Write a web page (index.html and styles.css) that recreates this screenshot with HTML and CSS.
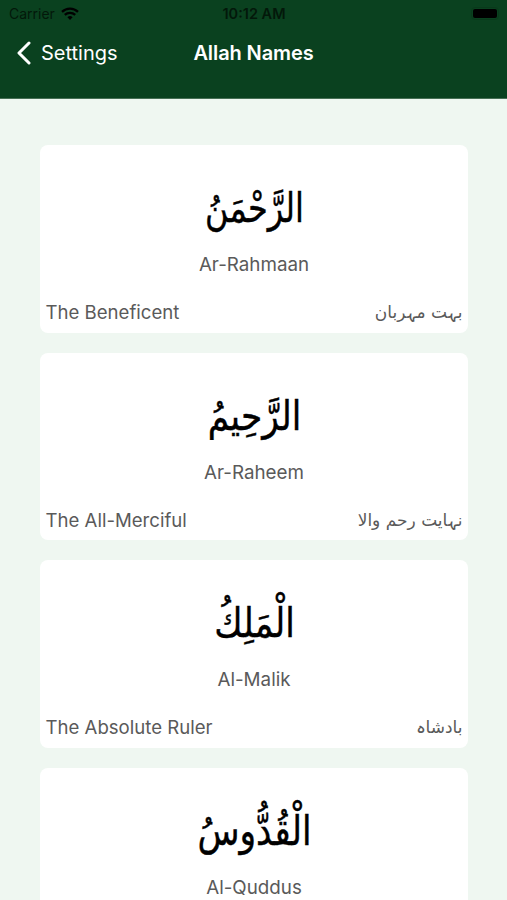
FILE: index.html
```
<!DOCTYPE html>
<html lang="en">
<head>
  <meta charset="UTF-8" />
  <title>Allah Names</title>
  <link rel="stylesheet" href="styles.css">
</head>
<body>
  <!-- Header -->
  <header class="header">
    <div class="status-bar">
      <div class="carrier">
        <span>Carrier</span>
        <svg class="wifi" viewBox="0 0 18 13" width="18" height="13">
          <path d="M1 4.8a11.5 11.5 0 0 1 16 0" />
          <path d="M3.8 7.9a7.5 7.5 0 0 1 10.4 0" />
          <path class="wifi-dot" d="M6.4 10.2a4 4 0 0 1 5.2 0L9 13z" />
        </svg>
      </div>
      <span class="time">10:12 AM</span>
      <div class="battery"><span class="battery-level"></span></div>
    </div>
    <nav class="nav-bar">
      <a class="back">
        <svg viewBox="0 0 16 24" width="16" height="24"><path d="M14 2L4 12l10 10" /></svg>
        <span>Settings</span>
      </a>
      <h1 class="title">Allah Names</h1>
    </nav>
  </header>

  <!-- Names list -->
  <main class="names">
    <div class="card">
      <div class="arabic narrow" lang="ar" dir="rtl">الرَّحْمَنُ</div>
      <div class="latin">Ar-Rahmaan</div>
      <div class="meaning">
        <span>The Beneficent</span>
        <span class="urdu" lang="ur" dir="rtl">بہت مہربان</span>
      </div>
    </div>
    <div class="card">
      <div class="arabic" lang="ar" dir="rtl">الرَّحِيمُ</div>
      <div class="latin">Ar-Raheem</div>
      <div class="meaning">
        <span>The All-Merciful</span>
        <span class="urdu" lang="ur" dir="rtl">نہایت رحم والا</span>
      </div>
    </div>
    <div class="card">
      <div class="arabic" lang="ar" dir="rtl">الْمَلِكُ</div>
      <div class="latin">Al-Malik</div>
      <div class="meaning">
        <span>The Absolute Ruler</span>
        <span class="urdu" lang="ur" dir="rtl">بادشاہ</span>
      </div>
    </div>
    <div class="card">
      <div class="arabic" lang="ar" dir="rtl">الْقُدُّوسُ</div>
      <div class="latin">Al-Quddus</div>
    </div>
  </main>
</body>
</html>
```
FILE: styles.css
```
* {
  margin: 0;
  padding: 0;
  box-sizing: border-box;
}

body {
  font-family: Inter, "DejaVu Sans", sans-serif;
  background-color: #eff7f1;
  color: #5a5a5a;
  height: 100vh;
  overflow: hidden;
}

/* Header */
.header {
  height: 99px;
  background-color: #0a411f;
  border-bottom: 1px solid #476f55;
}

.status-bar {
  display: grid;
  grid-template-columns: 1fr auto 1fr;
  align-items: center;
  height: 27px;
  padding: 0 8px 0 9px;
  font-size: 14px;
  color: #03180a;
}

.carrier {
  display: flex;
  align-items: center;
  gap: 6px;
}

.wifi {
  fill: none;
  stroke: #000;
  stroke-width: 2.3;
}

.wifi-dot {
  fill: #000;
  stroke: none;
}

.time {
  font-size: 14.5px;
  font-weight: 600;
}

.battery {
  justify-self: end;
  width: 28px;
  height: 13px;
  padding: 1px;
  border: 1px solid #093a1b;
  border-radius: 4px;
}

.battery-level {
  display: block;
  height: 100%;
  border-radius: 2px;
  background-color: #000;
}

.nav-bar {
  display: grid;
  grid-template-columns: 1fr auto 1fr;
  align-items: center;
  height: 51px;
  padding: 0 15px;
  color: #fff;
}

.back {
  display: flex;
  align-items: center;
  gap: 10px;
  font-size: 20px;
}

.back svg {
  fill: none;
  stroke: #fff;
  stroke-width: 3;
  stroke-linecap: round;
  stroke-linejoin: round;
}

.title {
  font-size: 20px;
  font-weight: 600;
  letter-spacing: -0.1px;
}

/* Cards */
.names {
  display: flex;
  flex-direction: column;
  gap: 20px;
  height: 801px;
  padding: 46px 39px 0 40px;
  overflow: hidden;
}

.card {
  flex-shrink: 0;
  height: 187.7px;
  padding: 0 5.5px;
  border-radius: 8px;
  background-color: #fff;
}

.arabic {
  height: 104px;
  line-height: 126px;
  text-align: center;
  font-family: "DejaVu Sans", sans-serif;
  font-size: 41px;
  color: #000;
  -webkit-text-stroke: 0.4px #000;
  transform: scaleX(0.84);
}

.arabic.narrow {
  transform: scaleX(0.78);
}

.latin {
  height: 32px;
  line-height: 32px;
  text-align: center;
  font-size: 18.8px;
}

.meaning {
  display: flex;
  justify-content: space-between;
  align-items: center;
  margin-top: 16px;
  height: 30px;
  font-size: 18.6px;
}

.urdu {
  font-family: "DejaVu Sans", sans-serif;
  font-size: 17px;
}
```
